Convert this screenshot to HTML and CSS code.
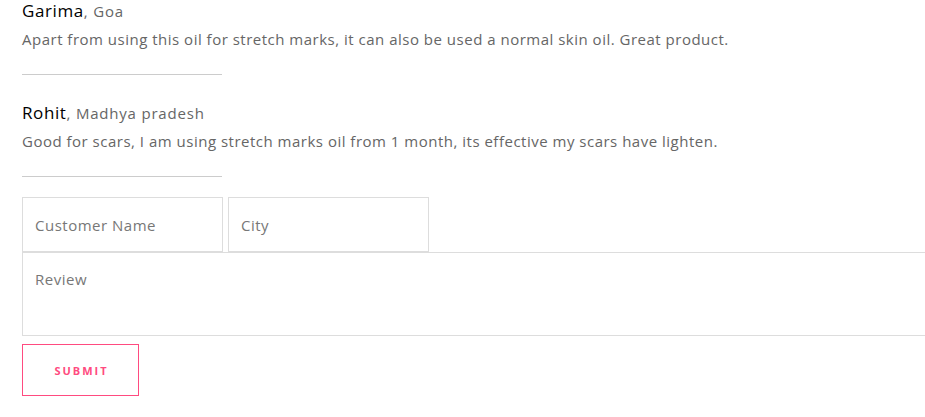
FILE: index.html
```html
<!DOCTYPE html>
<html>
<head>
<meta charset="utf-8">
<link rel="stylesheet" href="styles.css">
</head>
<body>
<div class="page">
  <div class="review">
    <div class="who"><span class="name">Garima</span>, <span class="city">Goa</span></div>
    <p class="text">Apart from using this oil for stretch marks, it can also be used a normal skin oil. Great product.</p>
    <hr class="divider">
  </div>
  <div class="review">
    <div class="who"><span class="name">Rohit</span>, <span class="city">Madhya pradesh</span></div>
    <p class="text">Good for scars, I am using stretch marks oil from 1 month, its effective my scars have lighten.</p>
    <hr class="divider">
  </div>
  <form class="form">
    <div class="row">
      <input class="field" type="text" placeholder="Customer Name">
      <input class="field" type="text" placeholder="City">
    </div>
    <textarea class="area" placeholder="Review"></textarea>
    <button class="submit" type="button">SUBMIT</button>
  </form>
</div>
</body>
</html>
```

FILE: styles.css
```css
html, body {
  margin: 0;
  padding: 0;
  background: #fff;
  overflow: hidden;
}
.page {
  padding: 1px 0 0 22px;
  font-family: "Open Sans", Lato, sans-serif;
  color: #666;
}
.review {
  display: flex;
  flex-direction: column;
}
.review + .review {
  margin-top: 28px;
}
.who {
  line-height: 20px;
  font-size: 15px;
  letter-spacing: 0.8px;
  color: #666;
}
.name {
  font-size: 17px;
  letter-spacing: 0.6px;
  color: #000;
}
.text {
  margin: 8px 0 0;
  font-size: 15px;
  letter-spacing: 0.5px;
  line-height: 20px;
  color: #666;
}
.divider {
  margin: 25px 0 0;
  width: 200px;
  border: 0;
  border-top: 1px solid #ccc;
  height: 0;
}
.form {
  margin-top: 20px;
  display: flex;
  flex-direction: column;
  align-items: flex-start;
}
.row {
  display: flex;
  gap: 5px;
}
.field {
  box-sizing: border-box;
  width: 201px;
  height: 55px;
  margin: 0;
  padding: 0 12px;
  border: 1px solid #ddd;
  font-family: inherit;
  font-size: 15px;
  letter-spacing: 0.5px;
  color: #555;
  outline: none;
}
.field::placeholder, .area::placeholder {
  color: #777;
}
.area {
  box-sizing: border-box;
  width: 1000px;
  height: 84px;
  margin: 0;
  padding: 16px 12px;
  border: 1px solid #ddd;
  font-family: inherit;
  font-size: 15px;
  letter-spacing: 0.5px;
  resize: none;
  outline: none;
}
.submit {
  box-sizing: border-box;
  margin-top: 8px;
  width: 117px;
  height: 52px;
  background: #fff;
  border: 1px solid #ff4b80;
  color: #ff4b80;
  font-family: inherit;
  font-weight: 700;
  font-size: 11px;
  letter-spacing: 2px;
  padding: 0 0 0 2px;
  cursor: pointer;
}
```
